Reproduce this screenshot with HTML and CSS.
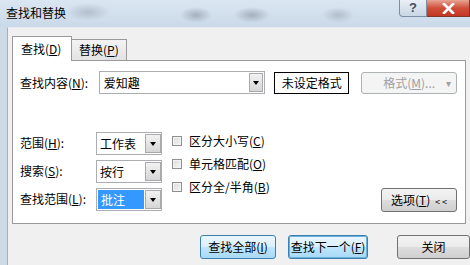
FILE: index.html
```html
<!DOCTYPE html>
<html lang="zh-CN">
<head>
   <meta charset="UTF-8">
   <title>查找和替换</title>
   <link rel="stylesheet" href="styles.css">
</head>
<body>
<div class="titlebar">
   <div class="title">查找和替换</div>
   <div class="caption">
      <div class="cap-help">?</div>
      <div class="cap-close">
         <svg width="13" height="11" viewBox="0 0 13 11">
            <path d="M2 1 L11 10 M11 1 L2 10" stroke="#fff" stroke-width="2.6" stroke-linecap="square"/>
         </svg>
      </div>
   </div>
</div>

<div class="window">
   <div class="tabs">
      <div class="tab active">查找(<u>D</u>)</div>
      <div class="tab">替换(<u>P</u>)</div>
   </div>

   <div class="panel">
      <div class="find-row">
         <div class="label wide">查找内容(<u>N</u>):</div>
         <div class="combo">
            <div class="combo-text">爱知趣</div>
            <div class="arrow-btn"><span class="tri"></span></div>
         </div>
         <div class="format-preview">未设定格式</div>
         <div class="btn disabled format-btn">格式(<u>M</u>)... <span class="small-tri">▾</span></div>
      </div>

      <div class="options">
         <div class="fields">
            <div class="label">范围(<u>H</u>):</div>
            <div class="select">
               <div class="select-text">工作表</div>
               <div class="arrow-btn wide"><span class="tri"></span></div>
            </div>
            <div class="label">搜索(<u>S</u>):</div>
            <div class="select">
               <div class="select-text">按行</div>
               <div class="arrow-btn wide"><span class="tri"></span></div>
            </div>
            <div class="label">查找范围(<u>L</u>):</div>
            <div class="select">
               <div class="select-text"><span class="selected">批注</span></div>
               <div class="arrow-btn wide"><span class="tri"></span></div>
            </div>
         </div>

         <div class="checks">
            <div class="check"><span class="box"></span>区分大小写(<u>C</u>)</div>
            <div class="check"><span class="box"></span>单元格匹配(<u>O</u>)</div>
            <div class="check"><span class="box"></span>区分全/半角(<u>B</u>)</div>
         </div>

         <div class="btn options-btn">选项(<u>T</u>) <span class="chev">&lt; &lt;</span></div>
      </div>
   </div>

   <div class="actions">
      <div class="btn blue find-all">查找全部(<u>I</u>)</div>
      <div class="btn blue focus find-next">查找下一个(<u>F</u>)</div>
      <div class="btn close-btn">关闭</div>
   </div>
</div>
</body>
</html>
```

FILE: styles.css
```css
* {
   box-sizing: border-box;
}

body {
   margin: 0;
   width: 470px;
   height: 265px;
   overflow: hidden;
   font-family: "Noto Sans CJK SC", "Liberation Sans", sans-serif;
   font-size: 12px;
   color: #000;
   background: #cddbe9;
}

u {
   text-decoration: underline;
   text-underline-offset: 1px;
}

/* title bar */
.titlebar {
   height: 27px;
   display: flex;
   align-items: flex-start;
   background:
      radial-gradient(ellipse 22px 9px at 88px 12px, rgba(120,130,140,0.35), transparent),
      radial-gradient(ellipse 16px 8px at 196px 15px, rgba(110,120,130,0.45), transparent),
      radial-gradient(ellipse 18px 8px at 252px 15px, rgba(110,120,130,0.45), transparent),
      radial-gradient(ellipse 16px 8px at 338px 15px, rgba(120,130,140,0.35), transparent),
      linear-gradient(#dbe6f2, #cad9e9);
}

.title {
   padding: 5px 0 0 6px;
   line-height: 16px;
}

.caption {
   margin-left: auto;
   display: flex;
}

.cap-help {
   width: 28px;
   height: 17px;
   border: 1px solid #7b8ea3;
   border-top: none;
   border-radius: 0 0 0 4px;
   background: linear-gradient(#e9eff6, #c9d6e4);
   color: #3d4f63;
   font-family: "Liberation Sans", sans-serif;
   font-size: 13px;
   font-weight: bold;
   text-align: center;
   line-height: 16px;
}

.cap-close {
   width: 43px;
   height: 17px;
   border: 1px solid #83332a;
   border-top: none;
   border-left: none;
   background: linear-gradient(#e8a493, #cf4f3a 50%, #c33622);
   display: flex;
   align-items: center;
   justify-content: center;
}

/* window body */
.window {
   margin-left: 7px;
   height: 238px;
   border-left: 1px solid #9fb0c2;
   border-top: 1px solid #e6ecf2;
   background: #f0f0f0;
   padding: 8px 0 0 4px;
}

.tabs {
   display: flex;
   align-items: flex-end;
   height: 24px;
}

.tab {
   height: 21px;
   padding: 0 7px;
   border: 1px solid #9a9a9a;
   border-bottom: none;
   border-left: none;
   background: linear-gradient(#f3f3f3, #e3e3e3);
   line-height: 20px;
}

.tab.active {
   height: 25px;
   width: 60px;
   border-left: 1px solid #9a9a9a;
   margin-bottom: -1px;
   position: relative;
   z-index: 1;
   background: #fff;
   padding: 0 0 0 8px;
   line-height: 24px;
}

.panel {
   width: 454px;
   height: 164px;
   border: 1px solid #9a9a9a;
   background: #fff;
   padding: 10px 8px 10px 7px;
   display: flex;
   flex-direction: column;
}

.find-row {
   display: flex;
   align-items: center;
   height: 23px;
}

.label {
   line-height: 22px;
}

.label.wide {
   width: 79px;
}

.combo {
   width: 167px;
   height: 23px;
   border: 1px solid #abadb3;
   display: flex;
}

.combo-text {
   flex: 1;
   padding-left: 4px;
   line-height: 21px;
}

.arrow-btn {
   width: 14px;
   margin: 1px;
   border: 1px solid #a9a9a9;
   background: linear-gradient(#f2f2f2, #d6d6d6);
   display: flex;
   align-items: center;
   justify-content: center;
}

.arrow-btn.wide {
   width: 16px;
   margin: 1px 0 1px 1px;
}

.tri {
   width: 0;
   height: 0;
   border-left: 3.5px solid transparent;
   border-right: 3.5px solid transparent;
   border-top: 4px solid #000;
}

.format-preview {
   margin-left: 9px;
   width: 75px;
   height: 22px;
   border: 1px solid #000;
   text-align: center;
   line-height: 20px;
}

.btn {
   height: 24px;
   border: 1px solid #707070;
   border-radius: 3px;
   background: linear-gradient(#f2f2f2 0%, #ebebeb 50%, #dddddd 51%, #cfcfcf 100%);
   text-align: center;
   line-height: 22px;
}

.btn.disabled {
   border-color: #adb2b5;
   background: #f4f4f4;
   color: #a0a0a0;
}

.format-btn {
   margin-left: 12px;
   width: 96px;
   height: 22px;
   line-height: 20px;
   position: relative;
}

.small-tri {
   position: absolute;
   right: 5px;
   font-size: 10px;
}

.options {
   margin-top: 38px;
   display: flex;
   align-items: flex-start;
}

.fields {
   display: grid;
   grid-template-columns: 76px 66px;
   row-gap: 5px;
}

.select {
   height: 23px;
   border: 1px solid #abadb3;
   display: flex;
}

.select-text {
   flex: 1;
   padding: 1px 0 1px 1px;
   line-height: 19px;
}

.select-text {
   padding-left: 3px;
}

.selected {
   display: block;
   width: 46px;
   height: 19px;
   margin-left: -2px;
   background: #3399ff;
   color: #fff;
   padding-left: 3px;
}

.checks {
   margin-left: 10px;
   margin-top: -3px;
   display: flex;
   flex-direction: column;
}

.check {
   height: 23px;
   display: flex;
   align-items: center;
}

.box {
   width: 10px;
   height: 10px;
   margin-right: 7px;
   border: 1px solid #8f8f8f;
   background: linear-gradient(135deg, #dcdcdc, #f6f6f6);
   box-shadow: inset 0 0 0 1px #f4f4f4;
}

.options-btn {
   margin-left: auto;
   margin-top: 56px;
   width: 76px;
}

.chev {
   font-size: 9px;
   margin-left: 2px;
}

.actions {
   display: flex;
   margin-top: 11px;
   justify-content: flex-end;
   width: 458px;
}

.btn.blue {
   border-color: #3c7fb1;
   background: linear-gradient(#eaf6fd 0%, #d9f0fc 50%, #bee6fd 51%, #a7d9f5 100%);
}

.btn.focus {
   box-shadow: inset 0 0 0 1px #6ab0d8;
   border-color: #3c7fb1;
}

.find-all {
   width: 76px;
   border-color: #7ea7c6;
}

.find-next {
   width: 80px;
   margin-left: 12px;
}

.close-btn {
   width: 73px;
   margin-left: 29px;
}
```
